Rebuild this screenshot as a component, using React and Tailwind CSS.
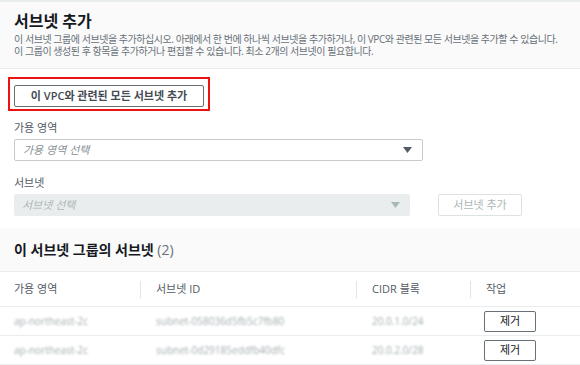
import React from 'react'

const font = { fontFamily: '"Open Sans", "Noto Sans CJK KR", sans-serif' }

const rows = [
  { az: 'ap-northeast-2c', id: 'subnet-058036d5fb5c7fb80', cidr: '20.0.1.0/24' },
  { az: 'ap-northeast-2c', id: 'subnet-0d29185eddfb40dfc', cidr: '20.0.2.0/28' },
]

function Caret({ color }) {
  return (
    <svg width="9" height="6" viewBox="0 0 9 6">
      <path d="M0 0h9L4.5 6z" fill={color} />
    </svg>
  )
}

function HeadCell({ children, first }) {
  if (first) {
    return <div className="flex items-center pl-[14px]">{children}</div>
  }
  return (
    <div className="flex items-center">
      <span className="w-px h-[17px] bg-[#e1e4e4]" />
      <span className="pl-[15px]">{children}</span>
    </div>
  )
}

export default function App() {
  return (
    <div className="w-[580px] h-[365px] overflow-hidden bg-white text-[#545b64]" style={font}>
      <div className="border-t-2 border-b border-[#eaeded] bg-[#fafafa] px-[14px] pt-[9px] pb-[11px]">
        <h2 className="text-[16px] leading-[20px] font-bold text-[#16191f]">서브넷 추가</h2>
        <p className="mt-[2px] text-[10px] leading-[12px] text-[#687078] whitespace-nowrap tracking-[-0.45px]">
          이 서브넷 그룹에 서브넷을 추가하십시오. 아래에서 한 번에 하나씩 서브넷을 추가하거나, 이 VPC와 관련된 모든 서브넷을 추가할 수 있습니다.
          <br />
          이 그룹이 생성된 후 항목을 추가하거나 편집할 수 있습니다. 최소 2개의 서브넷이 필요합니다.
        </p>
      </div>

      <div className="px-[14px]">
        <div className="mt-[8px] -ml-[6px] w-[202px] border-2 border-[#ee1111] px-[4px] pt-[3px] pb-[2px]">
          <button className="w-full h-[22px] border border-[#687078] rounded-[2px] bg-white text-[11px] leading-[14px] font-semibold text-[#444b53]">
            이 VPC와 관련된 모든 서브넷 추가
          </button>
        </div>

        <div className="mt-[10px] text-[11px] leading-[14px] text-[#545b64]">가용 영역</div>
        <div className="mt-[4px] w-[409px] h-[22px] border border-[#c6cccc] rounded-[2px] flex items-center justify-between pl-[8px] pr-[10px]">
          <span className="text-[11px] leading-[14px] italic text-[#879196]">가용 영역 선택</span>
          <Caret color="#545b64" />
        </div>

        <div className="mt-[15px] text-[11px] leading-[14px] text-[#545b64]">서브넷</div>
        <div className="mt-[4px] flex items-center gap-[28px]">
          <div className="w-[396px] h-[22px] bg-[#eaeded] rounded-[2px] flex items-center justify-between pl-[8px] pr-[10px]">
            <span className="text-[11px] leading-[14px] italic text-[#aab7b8]">서브넷 선택</span>
            <Caret color="#aab7b8" />
          </div>
          <button className="w-[84px] h-[22px] border border-[#dde2e2] rounded-[2px] bg-white text-[11px] leading-[14px] text-[#aab7b8]">
            서브넷 추가
          </button>
        </div>
      </div>

      <div className="mt-[12px] bg-[#fafafa] border-b border-[#eaeded] h-[44px] flex items-center px-[14px]">
        <h3 className="text-[14px] leading-[18px] font-bold text-[#16191f]">
          이 서브넷 그룹의 서브넷 <span className="font-normal text-[#687078]">(2)</span>
        </h3>
      </div>

      <div className="grid grid-cols-[140px_216px_114px_1fr] h-[35px] border-b border-[#eaeded] text-[11px] leading-[14px] text-[#545b64]">
        <HeadCell first>가용 영역</HeadCell>
        <HeadCell>서브넷 ID</HeadCell>
        <HeadCell>CIDR 블록</HeadCell>
        <HeadCell>작업</HeadCell>
      </div>

      {rows.map((r) => (
        <div key={r.id} className="grid grid-cols-[140px_216px_114px_1fr] h-[29px] border-b border-[#eaeded] text-[10px] leading-[12px]">
          <div className="flex items-center pl-[14px] text-[#a3adaf] blur-[0.9px]">{r.az}</div>
          <div className="flex items-center pl-[16px] text-[#a3adaf] blur-[0.9px]">{r.id}</div>
          <div className="flex items-center pl-[16px] text-[#a3adaf] blur-[0.9px]">{r.cidr}</div>
          <div className="flex items-center pl-[14px]">
            <button className="w-[52px] h-[21px] border border-[#687078] rounded-[2px] bg-white text-[11px] leading-[14px] text-[#16191f]">
              제거
            </button>
          </div>
        </div>
      ))}
    </div>
  )
}
